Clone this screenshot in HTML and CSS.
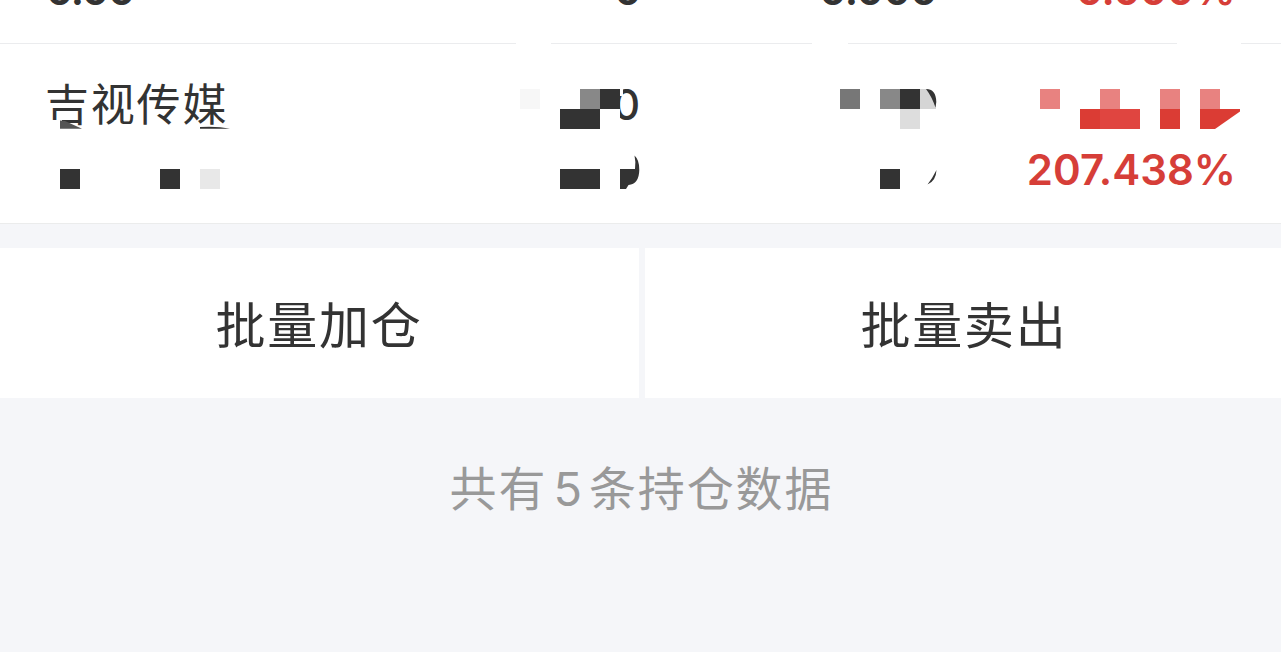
FILE: index.html
```html
<!DOCTYPE html>
<html lang="zh-CN">
<head>
<meta charset="utf-8">
<title>持仓</title>
<link rel="stylesheet" href="styles.css">
</head>
<body>
<main class="page">
  <section class="row row-prev">
    <span class="num wide">0.00</span><span class="num mid">0</span><span class="num">0.000</span><span class="num red">0.000%</span>
  </section>
  <div class="rule"><i></i><b></b><i></i><b></b><i></i><b></b><i></i></div>
  <section class="row row-stock">
    <div class="name">吉视传媒</div>
    <div class="qty num">0</div>
    <div class="rate num red">207.438%</div>
    <svg class="mosaic" width="1281" height="179" viewBox="0 44 1281 179" shape-rendering="crispEdges">
      <g fill="#fff"><path d="M52 119.500L60 119.500L82 129H52z"/><path d="M200 126h30v8h-30z"/><path d="M620 89h3v7h-3zM600 109h20v20h-20z"/></g>
      <g fill="#333">
        <path d="M60 169h20v20H60zM160 169h20v20h-20zM600 89h20v20h-20zM560 109h40v20h-40zM560 169h40v20h-40zM900 89h20v20h-20zM880 169h20v20h-20z"/>
        <g shape-rendering="geometricPrecision">
          <path fill="#555" d="M60 120.500L65 121L82 128.800H60z"/>
          <path d="M200 127Q218 126 230 128.800H200z"/>
          <path d="M634.500 155.500Q639.500 160 639.300 170Q639 184 628.500 185L626 189H620V169H635Q636 162 634.500 155.500z"/>
        </g>
      </g>
      <path fill="#e8e8e8" d="M200 169h20v20h-20z"/>
      <path fill="#f7f7f7" d="M520 89h20v20h-20z"/>
      <path fill="#888" d="M580 89h20v20h-20zM880 89h20v20h-20z"/>
      <path fill="#777" d="M840 89h20v20h-20z"/>
      <path fill="#ddd" d="M900 109h20v20h-20z"/>
      <g shape-rendering="geometricPrecision">
        <path fill="#d5d5d5" d="M920 89h7Q936 91 936 102V109H920z"/>
        <path fill="#333" d="M926 89Q936 89 936.300 102L935.500 107.500Q932 97 926 89zM936.500 170Q936 181 927.500 184.500Q932 179 936.500 170z"/>
      </g>
      <path fill="#e88280" d="M1040 89h20v20h-20zM1100 89h20v20h-20zM1160 89h20v20h-20zM1200 89h20v20h-20z"/>
      <path fill="#db3c34" d="M1080 109h20v20h-20zM1160 109h20v20h-20z"/>
      <path fill="#e04540" d="M1100 109h40v20h-40z"/>
      <path fill="#db3c34" shape-rendering="geometricPrecision" d="M1200 109H1240V111.500L1215 129H1200z"/>
    </svg>
  </section>
  <nav class="actions">
    <div class="action">批量加仓</div>
    <div class="action action-sell">批量卖出</div>
  </nav>
  <footer class="total">共有<span class="count">5</span>条持仓数据</footer>
</main>
</body>
</html>
```

FILE: styles.css
```css
* { box-sizing: border-box; }
body { margin: 0; background: #f5f6f9; color: #333; font-family: "Noto Sans CJK SC", sans-serif; }
.page { width: 1281px; height: 652px; overflow: hidden; }
.row { background: #fff; display: grid; }
.num { font-family: Inter, sans-serif; font-size: 42px; font-weight: 500; line-height: 50px; white-space: nowrap; }
.red { color: #d63e38; }
.row-prev { height: 43px; overflow: hidden; grid-template-columns: 134px 505px 298px 298px; align-items: start; }
.row-prev .num { margin-top: -35px; text-align: right; font-weight: 600; letter-spacing: -0.8px; }
.row-prev .wide { letter-spacing: -1.5px; }
.row-prev .mid { margin-right: -2px; }
.rule { height: 1px; background: #fff; display: grid; grid-template-columns: 516px 35px 261px 36px 329px 64px 40px; }
.rule i { background: #ebecee; }
.row-stock { position: relative; height: 180px; grid-template: 94px 86px / 560px 80px 595px 46px; border-bottom: 1px solid #ebecec; }
.name { padding: 26px 0 0 45px; font-size: 44px; line-height: 64px; letter-spacing: 1.8px; }
.qty { padding-top: 36px; text-align: right; }
.rate { grid-row: 2; grid-column: 1 / 4; padding-top: 7px; margin-right: -1px; text-align: right; font-weight: 600; }
.mosaic { position: absolute; left: 0; top: 0; }
.actions { display: grid; grid-template-columns: 639px 636px; column-gap: 6px; margin-top: 24px; height: 150px; }
.action { background: #fff; display: flex; align-items: center; justify-content: center; font-size: 50px; line-height: 70px; letter-spacing: 1.7px; padding: 0 1px 3px 0; }
.action-sell { padding: 0 0 3px 2px; }
.total { margin-top: 53px; padding-left: 2px; text-align: center; color: #999; font-size: 47px; line-height: 70px; letter-spacing: 1.9px; }
.count { font-family: Inter, sans-serif; font-size: 47px; margin: 0 5px 0 6px; }
```
